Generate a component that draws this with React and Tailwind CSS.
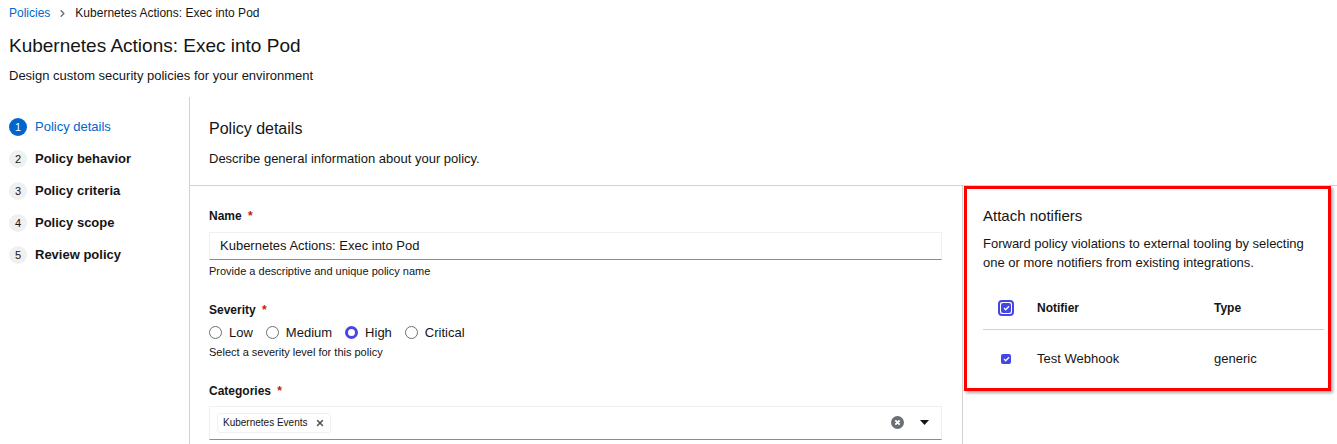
import { X, ChevronRight } from "lucide-react";

const steps = [
  { n: 1, label: "Policy details", active: true },
  { n: 2, label: "Policy behavior" },
  { n: 3, label: "Policy criteria" },
  { n: 4, label: "Policy scope" },
  { n: 5, label: "Review policy" },
];

function Radio({ label, checked }) {
  return (
    <label className="flex items-center gap-[7px] mr-[13px]">
      <span
        className={
          checked
            ? "w-[13px] h-[13px] rounded-full border-[3.5px] border-[#4646e6] bg-white"
            : "w-[13px] h-[13px] rounded-full border border-[#6a6e73] bg-white"
        }
      />
      <span className="text-[13px] text-[#151515]">{label}</span>
    </label>
  );
}

function Check({ ring }) {
  const box = (
    <span className="w-[10px] h-[10px] rounded-[2px] bg-[#4646e6] flex items-center justify-center">
      <svg width="7" height="6" viewBox="0 0 7 6">
        <path d="M1 3l1.7 1.7L6 1.2" stroke="white" strokeWidth="1.3" fill="none" />
      </svg>
    </span>
  );
  if (!ring) return box;
  return (
    <span className="w-[16px] h-[16px] rounded-[4px] border-[2px] border-[#4646e6] bg-white flex items-center justify-center">
      {box}
    </span>
  );
}

export default function App() {
  return (
    <div className="w-[1337px] h-[444px] overflow-hidden bg-white text-[#151515] font-['Liberation_Sans',Arial,sans-serif]">
      {/* header */}
      <div className="px-[9px] pt-[6px]">
        <div className="flex items-center text-[12px] h-[14px]">
          <span className="text-[#0066cc]">Policies</span>
          <ChevronRight size={11} strokeWidth={3} className="text-[#6a6e73] mx-[7px]" />
          <span>Kubernetes Actions: Exec into Pod</span>
        </div>
        <h1 className="text-[19px] mt-[14px] leading-[24px]">Kubernetes Actions: Exec into Pod</h1>
        <p className="text-[13px] mt-[10px] leading-[16px]">Design custom security policies for your environment</p>
      </div>

      <div className="flex mt-[13px]">
        {/* wizard nav */}
        <nav className="w-[190px] shrink-0 border-r border-[#d2d2d2] h-[360px] pt-[14px] pl-[9px]">
          {steps.map((s) => (
            <div key={s.n} className="flex items-center h-[32px]">
              <span
                className={
                  s.active
                    ? "w-[18px] h-[18px] rounded-full bg-[#0066cc] text-white text-[11px] flex items-center justify-center"
                    : "w-[18px] h-[18px] rounded-full bg-[#f0f0f0] text-[#151515] text-[11px] flex items-center justify-center"
                }
              >
                {s.n}
              </span>
              <span
                className={
                  s.active
                    ? "ml-[8px] text-[13px] text-[#0066cc]"
                    : "ml-[8px] text-[13px] font-bold text-[#151515]"
                }
              >
                {s.label}
              </span>
            </div>
          ))}
        </nav>

        {/* content */}
        <div className="flex-1">
          <div className="h-[89px] border-b border-[#d2d2d2] pl-[19px] pt-[22px]">
            <h2 className="text-[16px] leading-[20px]">Policy details</h2>
            <p className="text-[13px] mt-[10px]">Describe general information about your policy.</p>
          </div>

          <div className="flex">
            {/* form */}
            <div className="w-[772px] pl-[19px] pr-[20px] pt-[21px]">
              <div className="text-[12px] font-bold">
                Name <span className="text-[#c9190b] ml-[3px]">*</span>
              </div>
              <div className="mt-[7px] h-[28px] border border-[#f0f0f0] border-b-[#8a8d90] flex items-center pl-[10px] text-[13px]">
                Kubernetes Actions: Exec into Pod
              </div>
              <div className="text-[11px] mt-[3px]">Provide a descriptive and unique policy name</div>

              <div className="text-[12px] font-bold mt-[21px]">
                Severity <span className="text-[#c9190b] ml-[3px]">*</span>
              </div>
              <div className="flex items-center mt-[4px]">
                <Radio label="Low" />
                <Radio label="Medium" />
                <Radio label="High" checked />
                <Radio label="Critical" />
              </div>
              <div className="text-[11px] mt-[2px]">Select a severity level for this policy</div>

              <div className="text-[12px] font-bold mt-[21px]">
                Categories <span className="text-[#c9190b] ml-[3px]">*</span>
              </div>
              <div className="mt-[6px] h-[34px] border border-[#f0f0f0] border-b-[#8a8d90] flex items-center pl-[7px] pr-[12px]">
                <span className="h-[20px] border border-[#f0f0f0] rounded-[3px] flex items-center px-[5px] text-[10px] text-[#151515]">
                  Kubernetes Events
                  <X size={10} strokeWidth={3.5} className="ml-[7px] text-[#4f5255]" />
                </span>
                <div className="flex-1" />
                <svg width="13" height="13" viewBox="0 0 13 13" className="mr-[16px]">
                  <circle cx="6.5" cy="6.5" r="6.5" fill="#6a6e73" />
                  <path d="M4.3 4.3l4.4 4.4M8.7 4.3l-4.4 4.4" stroke="white" strokeWidth="1.8" />
                </svg>
                <svg width="9" height="5" viewBox="0 0 9 5">
                  <path d="M0 0h9L4.5 5z" fill="#151515" />
                </svg>
              </div>
            </div>

            {/* notifiers */}
            <div className="flex-1 border-l border-[#d2d2d2] h-[260px]">
              <div className="ml-[1px] mr-[6px] h-[205px] border-[3px] border-[#ff0000] shadow-[2px_2px_3px_rgba(0,0,0,0.35)] pl-[16px] pr-[4px] pt-[17px]">
                <h3 className="text-[15px] leading-[20px]">Attach notifiers</h3>
                <p className="text-[13px] leading-[19px] mt-[8px] pr-[20px]">
                  Forward policy violations to external tooling by selecting one or more notifiers from existing integrations.
                </p>
                <div className="mt-[25px] flex items-center h-[33px] border-b border-[#d2d2d2] pb-[11px] text-[12px] font-bold">
                  <span className="w-[54px] pl-[15px]">
                    <Check ring />
                  </span>
                  <span className="w-[177px]">Notifier</span>
                  <span>Type</span>
                </div>
                <div className="flex items-center h-[58px] text-[13px] text-[#151515]">
                  <span className="w-[54px] pl-[18px]">
                    <Check />
                  </span>
                  <span className="w-[177px]">Test Webhook</span>
                  <span>generic</span>
                </div>
              </div>
            </div>
          </div>
        </div>
      </div>
    </div>
  );
}
